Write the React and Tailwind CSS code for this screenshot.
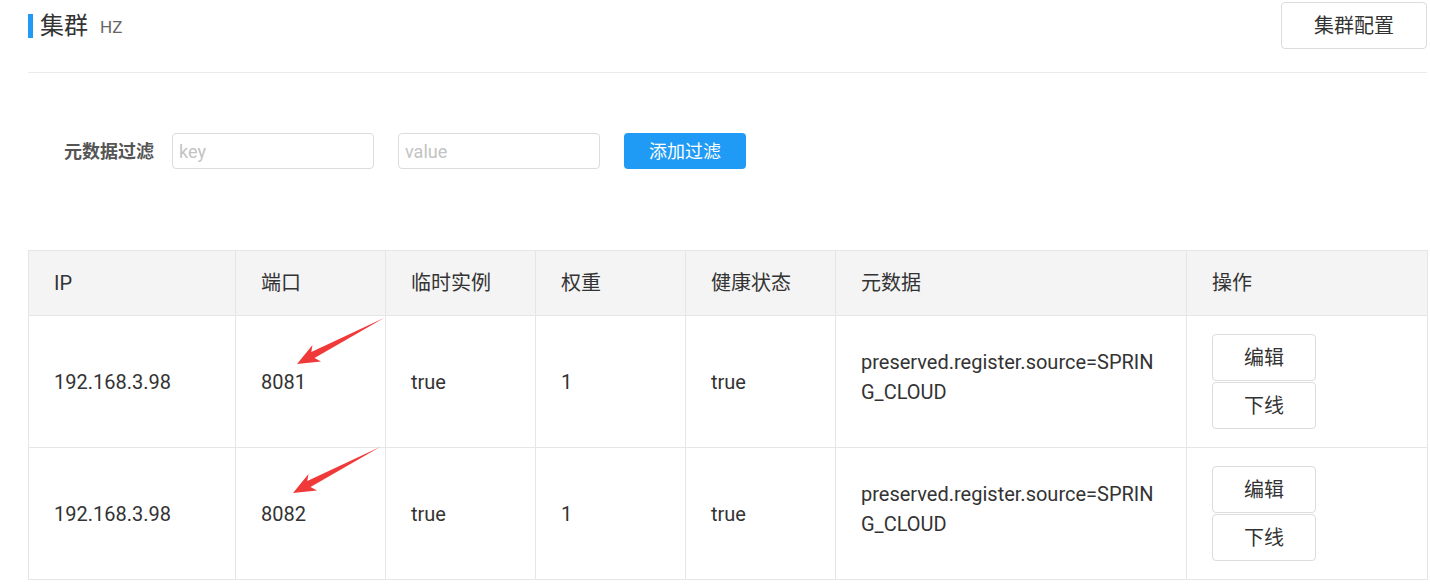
import React from 'react';

const rows = [
    { ip: '192.168.3.98', port: '8081', ephemeral: 'true', weight: '1', healthy: 'true', meta: 'preserved.register.source=SPRING_CLOUD', arrow: { left: 61, top: 2 } },
    { ip: '192.168.3.98', port: '8082', ephemeral: 'true', weight: '1', healthy: 'true', meta: 'preserved.register.source=SPRING_CLOUD', arrow: { left: 57, top: -1 } },
];

const columns = [
    { name: 'IP', width: 'w-[207px]' },
    { name: '端口', width: 'w-[150px]' },
    { name: '临时实例', width: 'w-[150px]' },
    { name: '权重', width: 'w-[150px]' },
    { name: '健康状态', width: 'w-[150px]' },
    { name: '元数据', width: 'w-[351px]' },
    { name: '操作', width: 'w-[241px]' },
];

// Red annotation arrow, tip at bottom-left
const Arrow = ({ left, top }) => (
    <svg
        className="absolute pointer-events-none"
        style={{ left, top }}
        width="88"
        height="48"
        viewBox="0 0 88 48"
    >
        <polygon
            points="0,46 24,43.5 17.5,40 87,0 14.3,34 15.5,27"
            fill="#f03a3a"
        />
    </svg>
);

export default function App() {
    return (
        <div className="min-h-screen bg-white font-['Roboto','Noto_Sans_CJK_SC',sans-serif] text-[#333] pl-[28px] pr-[3px]">
            {/* Header */}
            <div className="flex items-start justify-between pt-[2px]">
                <div className="flex items-center h-[47px]">
                    <div className="w-[5px] h-[24px] bg-[#1f9bf5]" />
                    <span className="ml-[7px] text-[24px] leading-none text-[#333]">集群</span>
                    <span className="ml-[12px] text-[17px] leading-none text-[#666] mt-[3px]">HZ</span>
                </div>
                <button className="w-[146px] h-[47px] border border-[#dcdcdc] rounded-[4px] bg-white text-[20px] text-[#333]">
                    集群配置
                </button>
            </div>
            <div className="mt-[23px] h-px bg-[#ebebeb]" />

            {/* Filter */}
            <div className="flex items-center mt-[60px] pl-[36px]">
                <span className="text-[18px] font-bold text-[#555] w-[108px]">元数据过滤</span>
                <input
                    placeholder="key"
                    className="w-[202px] h-[36px] border border-[#dcdcdc] rounded-[4px] px-[6px] text-[18px] placeholder:text-[#c3c3c3] outline-none"
                />
                <input
                    placeholder="value"
                    className="ml-[24px] w-[202px] h-[36px] border border-[#dcdcdc] rounded-[4px] px-[6px] text-[18px] placeholder:text-[#c3c3c3] outline-none"
                />
                <button className="ml-[24px] w-[122px] h-[36px] rounded-[4px] bg-[#1f9bf5] text-white text-[18px]">
                    添加过滤
                </button>
            </div>

            {/* Table */}
            <table className="mt-[81px] w-[1399px] table-fixed border-collapse text-[20px]">
                <thead>
                    <tr className="h-[65px] bg-[#f4f4f4]">
                        {columns.map((c) => (
                            <th key={c.name} className={`${c.width} border border-[#e6e6e6] px-[25px] text-left font-normal`}>
                                {c.name}
                            </th>
                        ))}
                    </tr>
                </thead>
                <tbody>
                    {rows.map((r, i) => (
                        <tr key={i} className="h-[132px]">
                            <td className="border border-[#e6e6e6] px-[25px]">{r.ip}</td>
                            <td className="relative border border-[#e6e6e6] px-[25px]">
                                {r.port}
                                <Arrow left={r.arrow.left} top={r.arrow.top} />
                            </td>
                            <td className="border border-[#e6e6e6] px-[25px]">{r.ephemeral}</td>
                            <td className="border border-[#e6e6e6] px-[25px]">{r.weight}</td>
                            <td className="border border-[#e6e6e6] px-[25px]">{r.healthy}</td>
                            <td className="border border-[#e6e6e6] px-[25px] pb-[10px] break-all leading-[30px]">{r.meta}</td>
                            <td className="border border-[#e6e6e6] px-[25px]">
                                <div className="flex flex-col gap-[1px]">
                                    <button className="w-[104px] h-[47px] border border-[#dcdcdc] rounded-[4px] bg-white text-[20px]">编辑</button>
                                    <button className="w-[104px] h-[47px] border border-[#dcdcdc] rounded-[4px] bg-white text-[20px]">下线</button>
                                </div>
                            </td>
                        </tr>
                    ))}
                </tbody>
            </table>
        </div>
    );
}
